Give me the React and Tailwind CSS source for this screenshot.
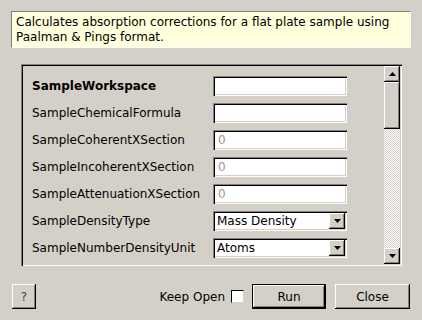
import React from "react";

const rows = [
  { label: "SampleWorkspace", bold: true, kind: "text", value: "" },
  { label: "SampleChemicalFormula", kind: "text", value: "" },
  { label: "SampleCoherentXSection", kind: "text", placeholder: "0" },
  { label: "SampleIncoherentXSection", kind: "text", placeholder: "0" },
  { label: "SampleAttenuationXSection", kind: "text", placeholder: "0" },
  { label: "SampleDensityType", kind: "combo", value: "Mass Density" },
  { label: "SampleNumberDensityUnit", kind: "combo", value: "Atoms" },
  { label: "", kind: "text", value: "" },
];

const sunken =
  "shadow-[inset_1px_1px_0_#808080,inset_2px_2px_0_#000,inset_-1px_-1px_0_#fff,inset_-2px_-2px_0_#d4d0c8]";
const raised =
  "shadow-[inset_-1px_-1px_0_#000,inset_1px_1px_0_#fff,inset_-2px_-2px_0_#808080]";

const Arrow = ({ down }) => (
  <svg width="7" height="4" viewBox="0 0 7 4">
    <path d={down ? "M0 0h7L3.5 4z" : "M0 4h7L3.5 0z"} fill="#000" />
  </svg>
);

const Field = ({ row }) => {
  if (row.kind === "combo") {
    return (
      <div className={`w-[134px] h-[20px] bg-white flex items-center pl-[4px] pr-[2px] ${sunken}`}>
        <span className="flex-1 text-black">{row.value}</span>
        <div className={`w-[16px] h-[16px] bg-[#d4d0c8] flex items-center justify-center ${raised}`}>
          <Arrow down />
        </div>
      </div>
    );
  }
  return (
    <div className={`w-[134px] h-[20px] bg-white flex items-center pl-[5px] ${sunken}`}>
      <span className="text-[#999]">{row.placeholder || row.value}</span>
    </div>
  );
};

const App = () => {
  return (
    <div
      className="w-[422px] h-[320px] bg-[#d4d0c8] text-[12px] text-black overflow-hidden flex flex-col"
      style={{ fontFamily: '"DejaVu Sans", sans-serif' }}
    >
      {/* description */}
      <div className="mx-[11px] mt-[11px] h-[37px] bg-[#ffffdd] border border-t-[#808080] border-l-[#808080] border-b-white border-r-white px-[4px] pt-[3px] leading-[15px]">
        Calculates absorption corrections for a flat plate sample using Paalman &amp; Pings format.
      </div>

      {/* property list */}
      <div className={`ml-[21px] mt-[16px] w-[381px] h-[202px] flex p-[2px] ${sunken}`}>
        <div className="flex-1 overflow-hidden pl-[9px] pt-[10px] flex flex-col gap-[7px]">
          {rows.map((row, i) => (
            <div key={i} className="flex items-center h-[20px] shrink-0">
              <div className={`w-[181px] ${row.bold ? "font-bold" : ""}`}>{row.label}</div>
              <Field row={row} />
            </div>
          ))}
        </div>
        <div className="w-[16px] flex flex-col">
          <div className={`h-[16px] bg-[#d4d0c8] flex items-center justify-center ${raised}`}>
            <Arrow />
          </div>
          <div className={`h-[47px] bg-[#d4d0c8] ${raised}`} />
          <div className="flex-1 bg-[repeating-conic-gradient(#d4d0c8_0_25%,#fff_0_50%)] bg-[length:2px_2px]" />
          <div className={`h-[16px] bg-[#d4d0c8] flex items-center justify-center ${raised}`}>
            <Arrow down />
          </div>
        </div>
      </div>

      {/* buttons */}
      <div className="mt-[18px] px-[12px] flex items-center h-[25px]">
        <div className={`w-[24px] h-[25px] flex items-center justify-center text-[#444] ${raised}`}>?</div>
        <div className="flex-1" />
        <span className="mr-[6px]">Keep Open</span>
        <div className="w-[13px] h-[13px] bg-white border border-t-black border-l-black border-b-[#d4d0c8] border-r-[#d4d0c8] mr-[8px]" />
        <div className="w-[74px] h-[25px] border border-black">
          <div className={`w-full h-full flex items-center justify-center ${raised}`}>Run</div>
        </div>
        <div className={`ml-[9px] w-[75px] h-[25px] flex items-center justify-center ${raised}`}>Close</div>
      </div>
    </div>
  );
};

export default App;
